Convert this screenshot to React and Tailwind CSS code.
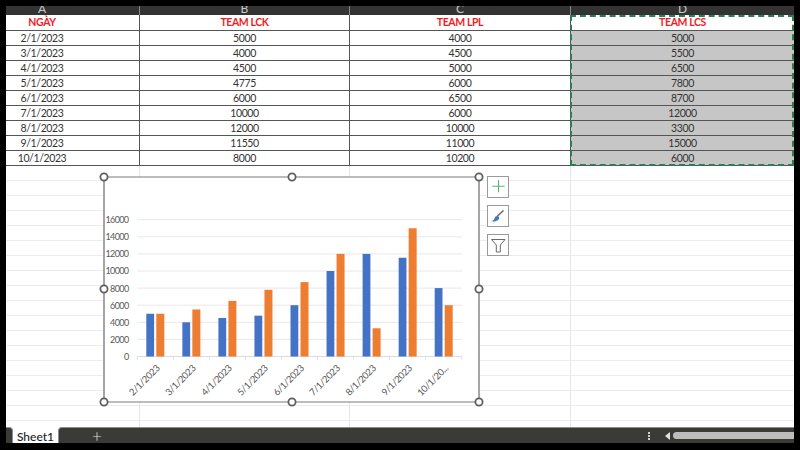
import React from "react";

const rows = [
  ["2/1/2023", 5000, 4000, 5000],
  ["3/1/2023", 4000, 4500, 5500],
  ["4/1/2023", 4500, 5000, 6500],
  ["5/1/2023", 4775, 6000, 7800],
  ["6/1/2023", 6000, 6500, 8700],
  ["7/1/2023", 10000, 6000, 12000],
  ["8/1/2023", 12000, 10000, 3300],
  ["9/1/2023", 11550, 11000, 15000],
  ["10/1/2023", 8000, 10200, 6000],
];
const grid = "grid grid-cols-[133px_210px_221px_224px]";
const labels = ["2/1/2023","3/1/2023","4/1/2023","5/1/2023","6/1/2023","7/1/2023","8/1/2023","9/1/2023","10/1/20..."];

function Handle({ x, y }) {
  return <circle cx={x} cy={y} r="3.6" fill="#fff" stroke="#5f5f5f" strokeWidth="1.8" />;
}

function Chart() {
  const y0 = 356.5;
  const step = 17.1 / 2000;
  const x0 = 137.3;
  const cw = 36.05;
  return (
    <svg className="absolute left-0 top-0" width="800" height="450" style={{ fontFamily: '"Lato","Liberation Sans",sans-serif' }}>
      <rect x="104" y="177" width="375" height="225" fill="#fff" />
      {[2000,4000,6000,8000,10000,12000,14000,16000].map((v) => (
        <line key={v} x1={x0} x2="462" y1={y0 - v * step} y2={y0 - v * step} stroke="#e8e8e8" strokeWidth="1" />
      ))}
      <line x1={x0} x2="462" y1={y0} y2={y0} stroke="#dcdcdc" />
      {Array.from({ length: 10 }).map((_, i) => (
        <line key={i} x1={x0 + i * cw} x2={x0 + i * cw} y1={y0} y2={y0 + 3} stroke="#dcdcdc" />
      ))}
      {[0,2000,4000,6000,8000,10000,12000,14000,16000].map((v) => (
        <text key={v} x="128.5" y={y0 - v * step + 3.4} textAnchor="end" fontSize="9" letterSpacing="-0.6" fill="#595959">{v}</text>
      ))}
      {rows.map((r, i) => (
        <g key={i}>
          <rect x={x0 + i * cw + 9} y={y0 - r[1] * step} width="7.8" height={r[1] * step} fill="#4472c4" />
          <rect x={x0 + i * cw + 19} y={y0 - r[3] * step} width="8" height={r[3] * step} fill="#ed7d31" />
          <text
            transform={`translate(${x0 + i * cw + 23} 369) rotate(-45)`}
            textAnchor="end"
            fontSize="9.5"
            letterSpacing="-0.4"
            fill="#595959"
          >
            {labels[i]}
          </text>
        </g>
      ))}
      <path d="M104 177H479M104 402H479" fill="none" stroke="#7a7a7a" strokeWidth="1.1" />
      <path d="M104 177V402M479 177V402" fill="none" stroke="#9c9c9c" strokeWidth="1.8" />
      <Handle x={104} y={177} /><Handle x={292} y={177} /><Handle x={479} y={177} />
      <Handle x={104} y={289} /><Handle x={479} y={289} />
      <Handle x={104} y={402} /><Handle x={292} y={402} /><Handle x={479} y={402} />

      {[176.5, 205.5, 234.5].map((y) => (
        <rect key={y} x="487.5" y={y} width="21" height="21" fill="#fff" stroke="#9a9a9a" strokeWidth="1" />
      ))}
      <path d="M498.5 180v12.3M492.3 186.2h12.3" stroke="#5fb07c" strokeWidth="1.1" fill="none" />
      <path d="M503.5 210.5 L497 216.5" stroke="#6a6a6a" strokeWidth="1.6" fill="none" />
      <path d="M491 221c2.5-.2 3.2-1.6 3.6-3 .5-1.6 2.6-2.8 4-1.4 1.2 1.2.6 2.8-.8 3.6-1.9 1.1-4.6 1.7-6.8.8z" fill="#3f78c8" />
      <path d="M491.5 239.5h13.5l-4.7 5.5v7h-4v-7z" fill="#fff" stroke="#6a6a6a" strokeWidth="1" />
    </svg>
  );
}

export default function App() {
  return (
    <div className="relative w-[800px] h-[450px] bg-black overflow-hidden" style={{ fontFamily: '"Lato","Liberation Sans",sans-serif' }}>
      <div className="absolute left-0 top-0 w-full h-[450px] pl-[6px] pr-[6px] pt-[6px] pb-[7px]">
        <div className="flex flex-col h-full bg-white">
          <div className={`${grid} h-[9px] shrink-0 bg-[#333333] text-[#c9c9c9] text-[12px] overflow-hidden`}>
            {["A", "B", "C", "D"].map((c, i) => (
              <div key={c} className={`text-center leading-[6px] ${i > 0 ? "border-l border-[#8a8a8a]" : "pr-[61px]"}`}>{c}</div>
            ))}
          </div>
          <div className="relative shrink-0">
            <div className={`${grid} h-[16px] text-[10.5px] tracking-[-0.4px] font-bold text-[#ef1c25] leading-[15px]`}>
              {["NGÀY", "TEAM LCK", "TEAM LPL", "TEAM LCS"].map((c, i) => (
                <div key={c} className={`text-center border-b border-[#555555] ${i > 0 ? "border-l" : "pr-[61px]"}`}>{c}</div>
              ))}
            </div>
            {rows.map((r) => (
              <div key={r[0]} className={`${grid} h-[15px] text-[10.5px] tracking-[-0.4px] text-[#333333] leading-[14px]`}>
                <div className="text-center border-b border-[#555555] pr-[61px]">{r[0]}</div>
                <div className="text-center border-b border-l border-[#555555]">{r[1]}</div>
                <div className="text-center border-b border-l border-[#555555]">{r[2]}</div>
                <div className="text-center border-b border-l border-[#555555] bg-[#c6c6c6]">{r[3]}</div>
              </div>
            ))}
            <div className="absolute top-0 bottom-0 left-[564px] right-0 border-2 border-dashed border-[#2a7d55]" />
          </div>
          <div className="relative flex-1 overflow-hidden bg-[repeating-linear-gradient(to_bottom,transparent_0,transparent_14px,#ececec_14px,#ececec_15px)]">
            <div className={`${grid} absolute inset-0`}>
              <div />
              <div className="border-l border-[#e6e6e6]" />
              <div className="border-l border-[#e6e6e6]" />
              <div className="border-l border-[#e6e6e6]" />
            </div>
          </div>
          <div className="flex h-[16px] shrink-0 bg-white">
            <div className="w-[7px] bg-[#3a3a37] border-t border-r border-[#8c8c8c] rounded-tr-[4px]" />
            <div className="w-[45px] pt-[2px] text-[#222222] text-[12px] leading-[15px] font-medium text-center overflow-hidden">Sheet1</div>
            <div className="flex-1 flex items-center bg-[#3a3a37] border-t border-l border-[#8c8c8c] rounded-tl-[4px]">
              <div className="ml-[33px] text-[#e0e0e0] text-[17px] leading-[14px] font-light">+</div>
              <div className="ml-auto flex items-center h-[14px]">
                <div className="flex flex-col gap-[1px] mr-[15px]">
                  <span className="w-[2px] h-[2px] bg-[#cfcfcf]" />
                  <span className="w-[2px] h-[2px] bg-[#cfcfcf]" />
                  <span className="w-[2px] h-[2px] bg-[#cfcfcf]" />
                </div>
                <div className="w-0 h-0 border-y-[4px] border-y-transparent border-r-[5px] border-r-[#e0e0e0] mr-[3px]" />
                <div className="w-[121px] h-[7px] bg-[#bdbdbd] rounded-l-[4px]" />
              </div>
            </div>
          </div>
        </div>
      </div>
      <Chart />
    </div>
  );
}
